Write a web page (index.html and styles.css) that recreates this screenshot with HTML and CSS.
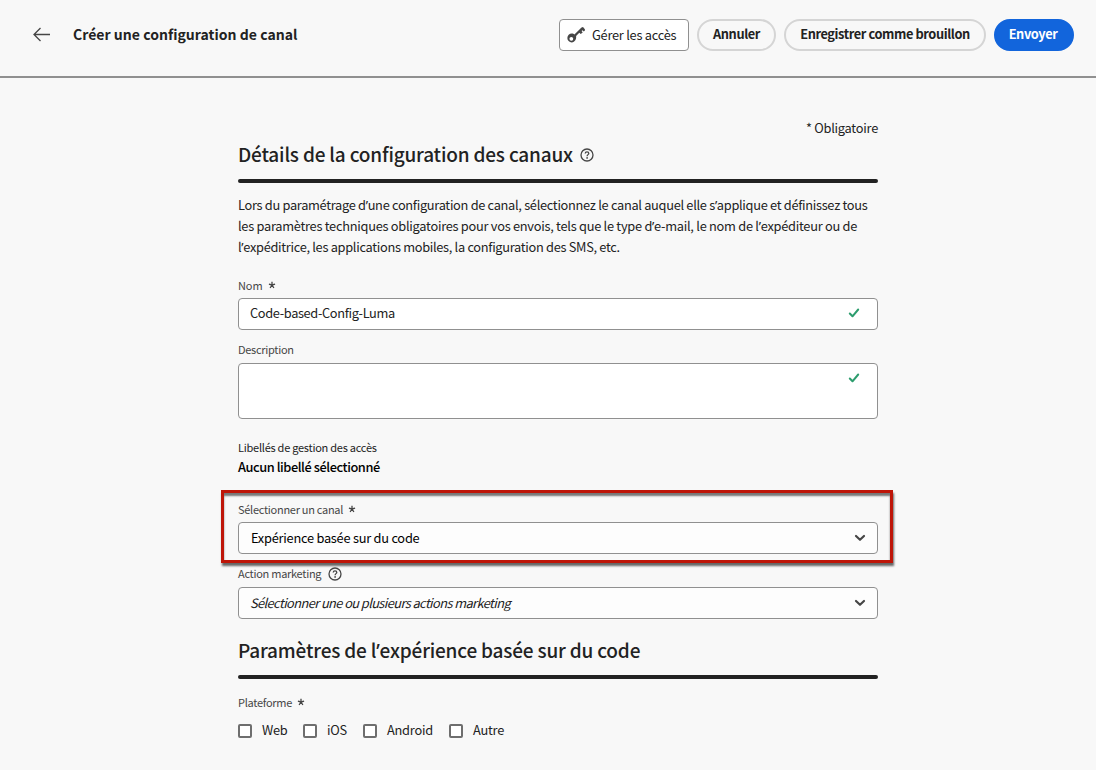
FILE: index.html
```html
<!DOCTYPE html>
<html lang="fr">
<head>
<meta charset="utf-8">
<title>Créer une configuration de canal</title>
<link rel="stylesheet" href="styles.css">
</head>
<body>
<svg class="defs" width="0" height="0">
  <symbol id="help" viewBox="0 0 14 14"><circle cx="7" cy="7" r="6" fill="none" stroke="currentColor" stroke-width="1.3"/><path d="M5.2 5.5C5.3 4.3 6 3.9 7 3.9s1.8.6 1.8 1.5C8.800 6.600 7.100 6.700 7.100 8.200" fill="none" stroke="currentColor" stroke-width="1.3"/><circle cx="7.100" cy="9.900" r=".85" fill="currentColor"/></symbol>
  <symbol id="check" viewBox="0 0 12 10"><path d="M1.800 5.500 4.500 8.300 10.200 1.500" fill="none" stroke="currentColor" stroke-width="2" stroke-linecap="round" stroke-linejoin="round"/></symbol>
  <symbol id="chevron" viewBox="0 0 12 8"><path d="M2 2 6 5.800 10 2" fill="none" stroke="currentColor" stroke-width="2.200" stroke-linecap="round" stroke-linejoin="round"/></symbol>
  <symbol id="star" viewBox="0 0 8 8"><path d="M4 4V.8M4 4 .9 3.200M4 4 7.100 3.200M4 4 2.100 7M4 4 5.900 7" fill="none" stroke="currentColor" stroke-width="1.300"/></symbol>
</svg>
<header class="topbar">
  <svg class="back" viewBox="0 0 18 16"><path d="M18 7.500H2M8.500 1 2 7.500 8.500 14" fill="none" stroke="currentColor" stroke-width="1.300"/></svg>
  <h1 class="title">Créer une configuration de canal</h1>
  <div class="actions">
    <button class="btn access"><svg class="key" viewBox="0 0 18 16"><path fill-rule="evenodd" d="M4.800 6.600C6 6.600 6.700 6.900 7.400 7.400L14.500.600 16 0 17.900 2.200 17.900 3.500 16.800 4.500 15.500 3.200 14.600 4.100 15.700 5.400 13.700 7 12.300 5.700 9.100 8.900C9.600 11.600 8 15.300 4.700 15.400A4.400 4.400 0 0 1 4.800 6.600ZM4.300 9.900A1.900 1.900 0 1 0 4.400 13.700 1.900 1.900 0 0 0 4.300 9.900Z" fill="currentColor"/></svg><span class="access-text">Gérer les accès</span></button>
    <button class="btn pill cancel">Annuler</button>
    <button class="btn pill draft">Enregistrer comme brouillon</button>
    <button class="btn pill send">Envoyer</button>
  </div>
</header>
<main class="form">
  <p class="required">* Obligatoire</p>
  <h2 class="heading"><span class="heading-details">Détails de la configuration des canaux</span><svg class="help"><use href="#help"/></svg></h2>
  <div class="rule"></div>
  <p class="intro"><span>Lors du paramétrage d<span class="apos">’</span>une configuration de canal, sélectionnez le canal auquel elle s<span class="apos">’</span>applique et définissez tous</span><br><span class="techniques">les paramètres techniques obligatoires pour vos envois, tels que le type d<span class="apos">’</span>e-mail, le nom de l<span class="apos">’</span>expéditeur ou de</span><br>l<span class="apos">’</span>expéditrice, les applications mobiles, la configuration des SMS, etc.</p>
  <label class="label name-label">Nom<svg class="star"><use href="#star"/></svg></label>
  <div class="field input"><span class="value name">Code-based-Config-Luma</span><svg class="check"><use href="#check"/></svg></div>
  <label class="label desc-label">Description</label>
  <div class="field area"><svg class="check"><use href="#check"/></svg></div>
  <div class="label access-label">Libellés de gestion des accès</div>
  <div class="none">Aucun libellé sélectionné</div>
  <section class="highlight">
    <label class="label channel-label">Sélectionner un canal<svg class="star"><use href="#star"/></svg></label>
    <div class="field select"><span class="value channel">Expérience basée sur du code</span><svg class="chevron"><use href="#chevron"/></svg></div>
  </section>
  <label class="label action-label">Action marketing<svg class="help"><use href="#help"/></svg></label>
  <div class="field select"><span class="value placeholder">Sélectionner une ou plusieurs actions marketing</span><svg class="chevron"><use href="#chevron"/></svg></div>
  <h2 class="heading second"><span class="heading-params">Paramètres de l<span class="apos">’</span>expérience basée sur du code</span></h2>
  <div class="rule"></div>
  <div class="label platform-label">Plateforme<svg class="star"><use href="#star"/></svg></div>
  <div class="platforms">
    <label class="option web"><i class="box"></i><span>Web</span></label>
    <label class="option ios"><i class="box"></i><span>iOS</span></label>
    <label class="option android"><i class="box"></i><span>Android</span></label>
    <label class="option other"><i class="box"></i><span>Autre</span></label>
  </div>
</main>
</body>
</html>
```
FILE: styles.css
```css
* { box-sizing: border-box; }
body { margin: 0; height: 770px; overflow: hidden; background: #f8f8f8; color: #222; font: 12.8px/20px "Noto Sans CJK SC", "Noto Sans", sans-serif; letter-spacing: -0.24px; white-space: nowrap; }
h1, h2, p { margin: 0; }
svg { flex: none; display: block; }
.defs { position: absolute; }
.apos { font-family: "Noto Sans", sans-serif; line-height: 1; }
.topbar { display: flex; align-items: flex-start; height: 78px; padding: 19px 22px 0 32px; border-bottom: 2px solid #909090; }
.back { width: 18px; height: 16px; margin-top: 8px; color: #464646; }
.title { margin-left: 23px; font-size: 14px; line-height: 30px; font-weight: 700; letter-spacing: 0.03px; }
.actions { display: flex; gap: 8px; margin-left: auto; }
.btn { display: flex; align-items: center; justify-content: center; height: 32px; padding: 0; font: inherit; letter-spacing: inherit; color: inherit; background: transparent; }
.access { width: 130px; padding-left: 7px; justify-content: flex-start; border: 1px solid #909090; border-radius: 4px; background: #fff; }
.key { width: 18px; height: 16px; margin-right: 7px; color: #464646; }
.pill { border: 2px solid #d5d5d5; border-radius: 16px; font-weight: 700; letter-spacing: -0.4px; padding-bottom: 2px; }
.cancel { width: 79px; }
.draft { width: 202px; }
.send { width: 80px; padding-right: 2px; border-color: #1265dc; background: #1265dc; color: #fff; }
.form { width: 640px; margin-left: 238px; padding-top: 40px; }
.required { text-align: right; }
.heading { display: flex; align-items: center; height: 41px; padding-bottom: 10px; font-size: 19px; line-height: 28px; font-weight: 500; letter-spacing: -0.18px; }
.rule { height: 4px; border-radius: 2px; background: #222; }
.help { width: 14px; height: 14px; margin-left: 7px; color: #464646; }
.heading .help { margin-top: 3px; }
.intro { margin-top: 11px; line-height: 21px; letter-spacing: -0.3px; }
.techniques { letter-spacing: -0.265px; }
.label { display: flex; align-items: center; height: 16px; font-size: 11px; line-height: 16px; letter-spacing: -0.28px; color: #464646; }
.star { width: 8px; height: 8px; margin-left: 5px; }
.name-label { margin-top: 20px; letter-spacing: -0.1px; }
.field { display: flex; align-items: center; justify-content: space-between; height: 32px; margin-top: 5px; padding: 0 17px 0 12px; border: 1px solid #909090; border-radius: 4px; background: #fff; }
.input { padding: 0 17px 2px 11px; }
.check { width: 12px; height: 10px; color: #2d9d6e; }
.name { letter-spacing: -0.35px; }
.chevron { width: 12px; height: 8px; color: #464646; }
.desc-label { margin-top: 11px; }
.area { height: 56px; margin-top: 6px; align-items: flex-start; justify-content: flex-end; padding-top: 9px; }
.access-label { margin-top: 20px; color: #222; letter-spacing: -0.25px; }
.none { margin-top: 2px; color: #000; font-weight: 500; letter-spacing: -0.43px; }
.highlight { width: 672px; height: 73px; margin: 13px 0 0 -17px; padding: 8px 12px 0 14px; border: 3px solid #be1508; box-shadow: 1px 3px 2px #666, inset 0 3px 2px #777; }
.select { padding: 0 11px 0 12px; background: #fdfdfd; }
.channel { color: #000; }
.action-label { margin-top: 2px; }
.action-label .help { margin-top: 1px; }
.action-label + .field { margin-top: 6px; padding-left: 11px; }
.placeholder { font-style: italic; letter-spacing: -0.58px; }
.second { height: 56px; padding-top: 14px; padding-bottom: 8px; }
.platform-label { margin-top: 15px; }
.platforms { display: flex; margin-top: 12px; }
.option { display: flex; align-items: center; }
.option span { margin-top: -2px; }
.box { width: 14px; height: 14px; margin-right: 10px; border: 2px solid #6e6e6e; border-radius: 2px; background: #fff; }
.web { width: 65px; }
.ios { width: 60px; }
.android { width: 86px; }
```
